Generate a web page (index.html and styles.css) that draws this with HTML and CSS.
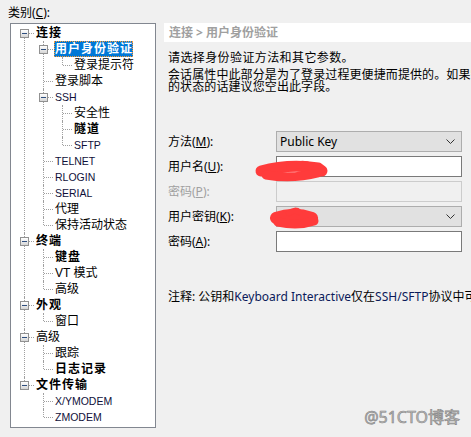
FILE: index.html
```html
<!DOCTYPE html>
<html lang="zh-CN">

<head>
  <meta charset="UTF-8">
  <title>会话选项 - 用户身份验证</title>
  <link rel="stylesheet" href="styles.css">
</head>

<body>
  <div class="dialog">
    <div class="side">
      <div class="side-label">类别(<u>C</u>):</div>
      <div class="tree-box">
        <ul class="tree">
          <li>
            <div class="node"><span class="toggle"></span><span class="label bold">连接</span></div>
            <ul>
              <li>
                <div class="node"><span class="toggle"></span><span class="label bold selected">用户身份验证</span></div>
                <ul>
                  <li><div class="node"><span class="label">登录提示符</span></div></li>
                </ul>
              </li>
              <li><div class="node"><span class="label">登录脚本</span></div></li>
              <li>
                <div class="node"><span class="toggle"></span><span class="label latin">SSH</span></div>
                <ul>
                  <li><div class="node"><span class="label">安全性</span></div></li>
                  <li><div class="node"><span class="label bold">隧道</span></div></li>
                  <li><div class="node"><span class="label latin">SFTP</span></div></li>
                </ul>
              </li>
              <li><div class="node"><span class="label latin">TELNET</span></div></li>
              <li><div class="node"><span class="label latin">RLOGIN</span></div></li>
              <li><div class="node"><span class="label latin">SERIAL</span></div></li>
              <li><div class="node"><span class="label">代理</span></div></li>
              <li><div class="node"><span class="label">保持活动状态</span></div></li>
            </ul>
          </li>
          <li>
            <div class="node"><span class="toggle"></span><span class="label bold">终端</span></div>
            <ul>
              <li><div class="node"><span class="label bold">键盘</span></div></li>
              <li><div class="node"><span class="label">VT 模式</span></div></li>
              <li><div class="node"><span class="label">高级</span></div></li>
            </ul>
          </li>
          <li>
            <div class="node"><span class="toggle"></span><span class="label bold">外观</span></div>
            <ul>
              <li><div class="node"><span class="label">窗口</span></div></li>
            </ul>
          </li>
          <li>
            <div class="node"><span class="toggle"></span><span class="label">高级</span></div>
            <ul>
              <li><div class="node"><span class="label">跟踪</span></div></li>
              <li><div class="node"><span class="label bold">日志记录</span></div></li>
            </ul>
          </li>
          <li>
            <div class="node"><span class="toggle"></span><span class="label bold">文件传输</span></div>
            <ul>
              <li><div class="node"><span class="label latin">X/YMODEM</span></div></li>
              <li><div class="node"><span class="label latin">ZMODEM</span></div></li>
            </ul>
          </li>
        </ul>
      </div>
    </div>

    <div class="pane">
      <div class="crumb">连接 &gt; 用户身份验证</div>
      <p class="intro">请选择身份验证方法和其它参数。</p>
      <p class="intro tight">会话属性中此部分是为了登录过程更便捷而提供的。如果需要<br>的状态的话建议您空出此字段。</p>

      <div class="form">
        <label class="field-label">方法(<u>M</u>):</label>
        <div class="combo">Public Key<span class="chevron"><svg width="9" height="6" viewBox="0 0 9 6"><path d="M0.5 0.5 L4.5 4.5 L8.5 0.5" fill="none" stroke="#333" stroke-width="1"/></svg></span></div>
        <div class="side-btn"></div>

        <label class="field-label">用户名(<u>U</u>):</label>
        <div class="input"></div>
        <div></div>

        <label class="field-label disabled">密码(<u>P</u>):</label>
        <div class="input off"></div>
        <div></div>

        <label class="field-label">用户密钥(<u>K</u>):</label>
        <div class="combo"><span class="chevron"><svg width="9" height="6" viewBox="0 0 9 6"><path d="M0.5 0.5 L4.5 4.5 L8.5 0.5" fill="none" stroke="#333" stroke-width="1"/></svg></span></div>
        <div class="side-btn"></div>

        <label class="field-label">密码(<u>A</u>):</label>
        <div class="input"></div>
        <div></div>
      </div>

      <p class="note">注释: 公钥和<span class="en">Keyboard Interactive</span>仅在<span class="en">SSH/SFTP</span>协议中可用。</p>
    </div>
  </div>

  <!-- redaction marks -->
  <svg class="marks" width="471" height="437" viewBox="0 0 471 437">
    <g fill="none" stroke="#ff3b3b" stroke-linecap="round" stroke-linejoin="round">
      <path d="M261 171 C276 167, 298 165, 318 168 L322 171" stroke-width="11"/>
      <path d="M266 175 C284 178, 302 177, 318 173" stroke-width="9"/>
      <path d="M290 167 C298 164, 306 164, 310 166" stroke-width="7"/>
      <path d="M276 218 C287 214, 300 214, 312 218" stroke-width="12"/>
      <path d="M278 222 C291 225, 305 224, 314 221" stroke-width="9"/>
      <path d="M289 213 C293 210, 297 210, 299 212" stroke-width="6"/>
    </g>
  </svg>

  <div class="watermark">@51CTO博客</div>
</body>

</html>
```

FILE: styles.css
```css
html,
body {
  margin: 0;
  overflow: hidden;
}

body {
  width: 471px;
  height: 437px;
  position: relative;
  background: #f0f0f0;
  color: #000;
  font-family: "Noto Sans", "Noto Sans CJK SC", sans-serif;
  font-size: 12px;
}

.dialog {
  display: flex;
}

.side {
  padding: 5px 0 0 10px;
  flex: none;
}

.side-label {
  margin-left: -2px;
  height: 16px;
  line-height: 16px;
  margin-bottom: 2px;
}

.tree-box {
  width: 146px;
  height: 405px;
  box-sizing: border-box;
  border: 1px solid #828790;
  background: #fff;
  overflow: hidden;
  font-family: "Liberation Sans", "Noto Sans CJK SC", sans-serif;
}

.tree,
.tree ul {
  list-style: none;
  margin: 0;
  padding: 0;
}

.tree {
  padding: 1px 0 0 13px;
}

.tree ul {
  margin-left: 19px;
}

.tree li {
  position: relative;
}

/* vertical connector */
.tree li::before {
  content: "";
  position: absolute;
  left: 0;
  top: 0;
  bottom: 0;
  border-left: 1px dotted #a0a0a0;
}

.tree li:last-child::before {
  bottom: auto;
  height: 8px;
}

.tree > li:first-child::before {
  top: 8px;
  height: auto;
}

/* horizontal connector */
.tree li::after {
  content: "";
  position: absolute;
  left: 1px;
  top: 8px;
  width: 9px;
  border-top: 1px dotted #a0a0a0;
}

.node {
  height: 16px;
  display: flex;
  align-items: center;
  padding-left: 11px;
}

.toggle {
  position: absolute;
  left: -4px;
  top: 4px;
  width: 7px;
  height: 7px;
  border: 1px solid #919191;
  background: linear-gradient(#ffffff, #d6d6d6);
  z-index: 1;
}

.toggle::after {
  content: "";
  position: absolute;
  left: 1px;
  top: 3px;
  width: 5px;
  height: 1px;
  background: #2e4e7e;
}

.label {
  display: block;
  height: 16px;
  line-height: 16px;
  padding: 0 1px;
  font-size: 12px;
  white-space: nowrap;
}

.label.latin {
  font-size: 10.5px;
  color: #10103a;
}

.label.bold {
  font-weight: 700;
  letter-spacing: 1px;
}

.label.selected {
  background: #0078d7;
  color: #fff;
  outline: 1px dotted #ff9a30;
  outline-offset: -1px;
  padding: 0 0 0 1px;
}

.pane {
  flex: 1;
  min-width: 0;
  padding: 23px 0 0 8px;
  white-space: nowrap;
}

.crumb {
  height: 19px;
  line-height: 19px;
  background: #fff;
  padding-left: 5px;
  color: #a0a0a0;
  font-weight: 700;
}

.intro {
  margin: 7px 0 0;
  padding-left: 4px;
  line-height: 16px;
  font-family: "Noto Sans CJK SC", sans-serif;
  letter-spacing: 0.4px;
}

.intro.tight {
  margin-top: 3px;
  line-height: 12px;
  letter-spacing: 0.1px;
}

.form {
  display: grid;
  grid-template-columns: 99px 186px 20px;
  grid-auto-rows: 21px;
  column-gap: 9px;
  row-gap: 4px;
  margin-top: 39px;
  padding-left: 4px;
}

.field-label {
  align-self: center;
  line-height: 16px;
}

.field-label.disabled {
  color: #a0a0a0;
}

.combo {
  position: relative;
  box-sizing: border-box;
  border: 1px solid #adadad;
  background: #e1e1e1;
  line-height: 19px;
  padding-left: 3px;
}

.chevron {
  position: absolute;
  right: 6px;
  top: 7px;
  line-height: 0;
}

.side-btn {
  box-sizing: border-box;
  border: 1px solid #adadad;
  background: #e1e1e1;
}

.input {
  box-sizing: border-box;
  border: 1px solid #7a7a7a;
  background: #fff;
}

.input.off {
  border-color: #cccccc;
  background: #f0f0f0;
}

.note {
  margin: 37px 0 0;
  padding-left: 4px;
  line-height: 16px;
}

.note .en {
  color: #0a1a5a;
}

.marks {
  position: absolute;
  left: 0;
  top: 0;
  pointer-events: none;
}

.watermark {
  position: absolute;
  right: 11px;
  bottom: 10px;
  line-height: 20px;
  font-size: 16px;
  color: #bdbdbd;
  -webkit-text-stroke: 0.6px #858585;
}
```
